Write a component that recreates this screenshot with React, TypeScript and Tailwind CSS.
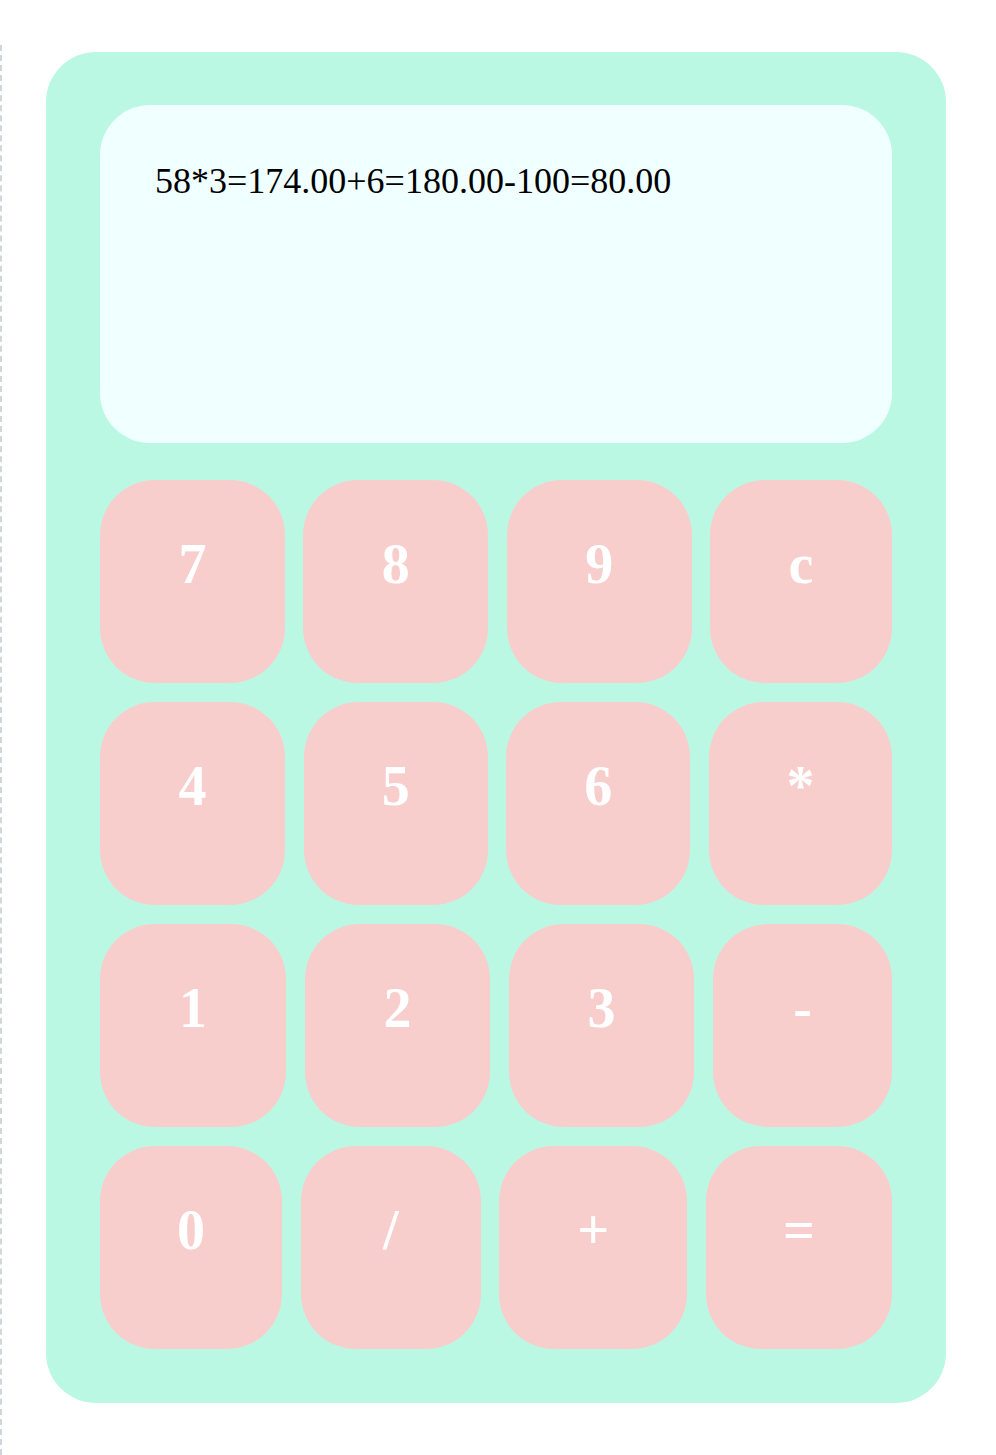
const rows: { label: string; w: string }[][] = [
  [
    { label: '7', w: 'w-[185px]' },
    { label: '8', w: 'w-[185px]' },
    { label: '9', w: 'w-[185px]' },
    { label: 'c', w: 'w-[182px]' },
  ],
  [
    { label: '4', w: 'w-[185px]' },
    { label: '5', w: 'w-[184px]' },
    { label: '6', w: 'w-[184px]' },
    { label: '*', w: 'w-[183px]' },
  ],
  [
    { label: '1', w: 'w-[186px]' },
    { label: '2', w: 'w-[185px]' },
    { label: '3', w: 'w-[185px]' },
    { label: '-', w: 'w-[179px]' },
  ],
  [
    { label: '0', w: 'w-[182px]' },
    { label: '/', w: 'w-[180px]' },
    { label: '+', w: 'w-[188px]' },
    { label: '=', w: 'w-[186px]' },
  ],
]

export default function App() {
  return (
    <div className="min-h-[1455px] bg-white pt-[45px]">
      <div className="min-h-[1410px] border-l-2 border-dashed border-gray-300 pt-[7px] pl-[44px]">
        <div className="w-[900px] rounded-[50px] bg-[#bbf8e4] px-[54px] pt-[53px] pb-[54px] font-['Liberation_Serif',serif]">
          <div className="h-[338px] rounded-[50px] bg-[#f0ffff] pt-[49px] pl-[55px] text-[36px] leading-normal text-black">
            58*3=174.00+6=180.00-100=80.00
          </div>
          <div className="mt-[37px] flex flex-col gap-[19px]">
            {rows.map((row, i) => (
              <div key={i} className="flex justify-between">
                {row.map((b) => (
                  <button
                    key={b.label}
                    type="button"
                    className={`${b.w} flex h-[203px] items-start justify-center rounded-[55px] bg-[#f8cecd] pt-[42px] text-[56px] leading-normal font-bold text-white`}
                  >
                    {b.label}
                  </button>
                ))}
              </div>
            ))}
          </div>
        </div>
      </div>
    </div>
  )
}
